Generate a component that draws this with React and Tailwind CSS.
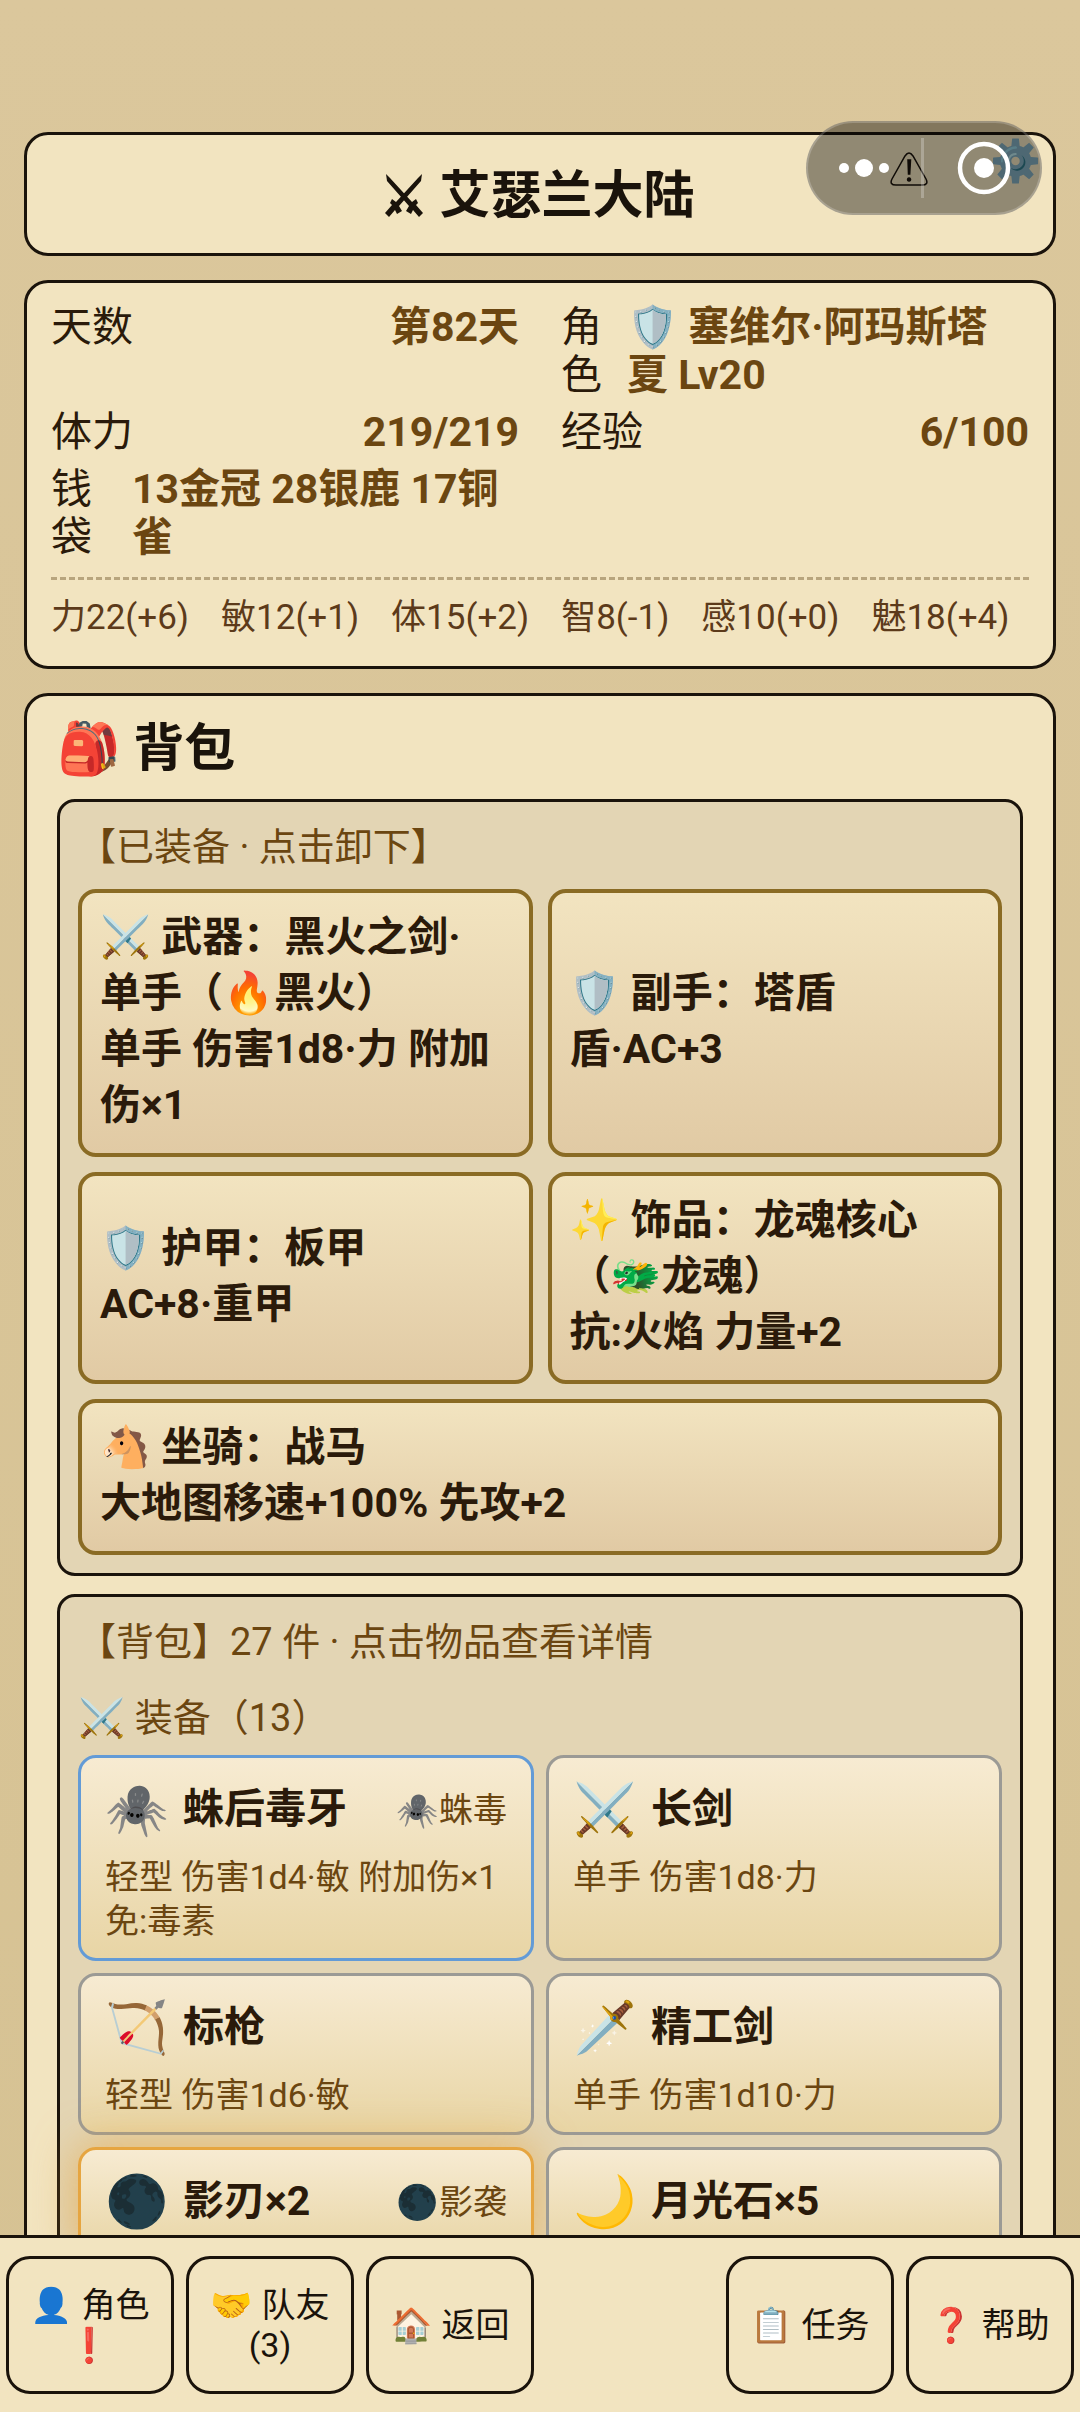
// src/pages/BackpackPage.jsx
import React from 'react';

const stats = [
  { label: '天数', value: '第82天' },
  { label: '角色', value: '🛡️ 塞维尔·阿玛斯塔\n夏 Lv20', labelClass: 'w-[66px]', wrap: true },
  { label: '体力', value: '219/219' },
  { label: '经验', value: '6/100' },
  { label: '钱袋', value: '13金冠 28银鹿 17铜\n雀', labelClass: 'w-[81px]', wrap: true },
];

const attributes = ['力22(+6)', '敏12(+1)', '体15(+2)', '智8(-1)', '感10(+0)', '魅18(+4)'];

const equipped = [
  { id: 'weapon', text: '⚔️ 武器：黑火之剑·\n单手（🔥黑火）\n单手 伤害1d8·力 附加\n伤×1' },
  { id: 'offhand', text: '🛡️ 副手：塔盾\n盾·AC+3' },
  { id: 'armor', text: '🛡️ 护甲：板甲\nAC+8·重甲' },
  { id: 'trinket', text: '✨ 饰品：龙魂核心\n（🐲龙魂）\n抗:火焰 力量+2' },
  { id: 'mount', text: '🐴 坐骑：战马\n大地图移速+100% 先攻+2', wide: true },
];

const items = [
  { icon: '🕷️', name: '蛛后毒牙', tag: '🕷️蛛毒', desc: '轻型 伤害1d4·敏 附加伤×1\n免:毒素', rarity: 'rare' },
  { icon: '⚔️', name: '长剑', desc: '单手 伤害1d8·力', rarity: 'common' },
  { icon: '🏹', name: '标枪', desc: '轻型 伤害1d6·敏', rarity: 'common' },
  { icon: '🗡️', name: '精工剑', desc: '单手 伤害1d10·力', rarity: 'common' },
  { icon: '🌑', name: '影刃×2', tag: '🌑影袭', rarity: 'legendary' },
  { icon: '🌙', name: '月光石×5', rarity: 'common' },
];

const rarityClass = {
  common: 'border-[#9b9a95]',
  rare: 'border-[#639bd6]',
  legendary: 'border-[#e6a540] shadow-[0_0_42px_3px_rgba(230,165,64,0.6)]',
};

const navItems = [
  { text: '👤 角色\n❗' },
  { text: '🤝 队友\n(3)' },
  { text: '🏠 返回' },
  null, // empty slot in the middle
  { text: '📋 任务' },
  { text: '❓ 帮助' },
];

function CrossedSwords() {
  return (
    <svg viewBox="0 0 38 44" className="w-[38px] h-[44px]" fill="#1a130b" aria-hidden="true">
      <path d="M1 0 L5 4 L27 28 L31 25 L33 29 L31 31 L38 39 L34 43 L28 36 L26 40 L21 37 L24 32 L2 7 Z" />
      <path d="M37 0 L33 4 L11 28 L7 25 L5 29 L7 31 L0 39 L4 43 L10 36 L12 40 L17 37 L14 32 L36 7 Z" />
    </svg>
  );
}

function Capsule() {
  return (
    <div className="absolute right-[38px] top-[121px] w-[236px] h-[94px] rounded-full bg-black/40 border-2 border-white/20">
      <svg viewBox="0 0 232 90" className="w-full h-full" fill="#fff" aria-hidden="true">
        <circle cx="36" cy="45" r="5" />
        <circle cx="56" cy="45" r="9" />
        <circle cx="76" cy="45" r="5" />
        <rect x="113" y="15" width="3" height="60" fillOpacity="0.25" />
        <circle cx="176" cy="45" r="24" fill="none" stroke="#fff" strokeWidth="4.5" />
        <circle cx="176" cy="45" r="10" />
      </svg>
    </div>
  );
}

function StatRow({ label, value, labelClass, wrap }) {
  return (
    <div className={wrap ? 'flex' : 'flex justify-between'}>
      <dt className={`shrink-0 ${wrap ? 'pr-6' : ''} ${labelClass || ''}`}>{label}</dt>
      <dd className="font-bold text-[#6b4611] whitespace-pre-line">{value}</dd>
    </div>
  );
}

function ItemCard({ item }) {
  return (
    <button
      type="button"
      className={`flex flex-col gap-2 text-left px-6 py-[15px] border-3 rounded-[18px] bg-linear-to-b from-[#f7ebd2] to-[#e8d5a5] ${rarityClass[item.rarity]}`}
    >
      <span className="flex items-center w-full h-[74px]">
        <span className="text-[51px] w-[78px] leading-[74px]">{item.icon}</span>
        <span className="flex-1 text-[41px] font-bold text-[#2a1a0a]">{item.name}</span>
        {item.tag && <span className="text-[34px] text-[#6b4611]">{item.tag}</span>}
      </span>
      {item.desc && (
        <span className="text-[34px] leading-[44px] text-[#6b4611] whitespace-pre-line">{item.desc}</span>
      )}
    </button>
  );
}

function App() {
  return (
    <div className="relative h-screen flex flex-col overflow-hidden bg-linear-to-b from-[#dbc79c] to-[#d6c293] text-[#1a130b] font-[Roboto,'Noto_Sans_CJK_SC','Noto_Color_Emoji',sans-serif]">
      <main className="flex-1 min-h-0 overflow-y-auto [scrollbar-width:none] px-6 pt-[132px] flex flex-col gap-6">
        {/* Title bar */}
        <header className="relative shrink-0 h-[124px] pt-1 flex items-center justify-center gap-4 border-3 border-[#1a130b] rounded-3xl bg-[#f2e4c0]">
          <CrossedSwords />
          <h1 className="text-[51px] font-bold">艾瑟兰大陆</h1>
          <button type="button" aria-label="提示" className="absolute right-[125px] top-[17px]">
            <svg viewBox="0 0 38 34" className="w-[38px] h-[34px]" fill="none" stroke="#1a130b" strokeWidth="1.5" aria-hidden="true">
              <path d="M15 4 Q19 -2 23 4 L36 27 Q39 33 32 33 L6 33 Q-1 33 2 27 Z" />
              <path d="M18 8 H20.500 L19.700 22 H18.500 Z M19 26 a1.500 1.500 0 1 0 0.100 0 Z" fill="#1a130b" />
            </svg>
          </button>
          <button type="button" aria-label="设置" className="absolute right-3 top-[2px] text-[41px] leading-[48px]">⚙️</button>
        </header>

        {/* Character status */}
        <section className="shrink-0 px-6 pt-5 pb-[21px] border-3 border-[#1a130b] rounded-3xl bg-[#f2e4c0]">
          <dl className="grid grid-cols-2 gap-x-[42px] gap-y-[9px] text-[41px] leading-[48px] text-[#2a1a0a]">
            {stats.map((s) => (
              <StatRow key={s.label} {...s} />
            ))}
          </dl>
          <ul className="flex gap-8 mt-4 pt-3 pb-px border-t-3 border-dashed border-[#b8a57e] text-[35px] leading-[52px] text-[#5c3a1a] whitespace-nowrap">
            {attributes.map((a) => (
              <li key={a}>{a}</li>
            ))}
          </ul>
        </section>

        {/* Backpack */}
        <section className="shrink-0 px-[30px] pt-[18px] pb-[30px] border-3 border-[#1a130b] rounded-3xl bg-[#f2e4c0]">
          <h2 className="mb-[15px] text-[51px] leading-[70px] font-bold">🎒 背包</h2>

          <div className="mb-[18px] p-[18px] border-3 border-[#1a130b] rounded-[18px] bg-[#e3d5b4]">
            <p className="mb-[15px] text-[38px] leading-[54px] text-[#6b4611]">【已装备 · 点击卸下】</p>
            <div className="grid grid-cols-2 gap-[15px]">
              {equipped.map((e) => (
                <button
                  key={e.id}
                  type="button"
                  className={`px-[18px] pt-4 pb-5 border-4 border-[#8a6b24] rounded-[18px] bg-linear-to-b from-[#f2e4c0] to-[#e1caa4] text-left text-[41px] leading-[56px] font-bold text-[#2a1a0a] whitespace-pre-line ${e.wide ? 'col-span-2' : ''}`}
                >
                  {e.text}
                </button>
              ))}
            </div>
          </div>

          <div className="p-[18px] border-3 border-[#1a130b] rounded-[18px] bg-[#e3d5b4]">
            <p className="mb-6 text-[38px] leading-[54px] text-[#6b4611]">【背包】27 件 · 点击物品查看详情</p>
            <h3 className="mb-3 text-[38px] leading-[50px] text-[#6b4611]">⚔️ 装备（13）</h3>
            <div className="grid grid-cols-2 gap-3">
              {items.map((item) => (
                <ItemCard key={item.name} item={item} />
              ))}
            </div>
          </div>
        </section>
      </main>

      {/* Bottom navigation */}
      <nav className="relative shrink-0 grid grid-cols-6 gap-3 px-1.5 py-[18px] border-t-3 border-[#1a130b] bg-[#f2e4c0]">
        {navItems.map((n, i) =>
          n ? (
            <button
              key={i}
              type="button"
              className="h-[138px] border-3 border-[#1a130b] rounded-3xl text-[34px] leading-10 whitespace-pre-line"
            >
              {n.text}
            </button>
          ) : (
            <div key={i} />
          )
        )}
      </nav>

      <Capsule />
    </div>
  );
}

export default App;
